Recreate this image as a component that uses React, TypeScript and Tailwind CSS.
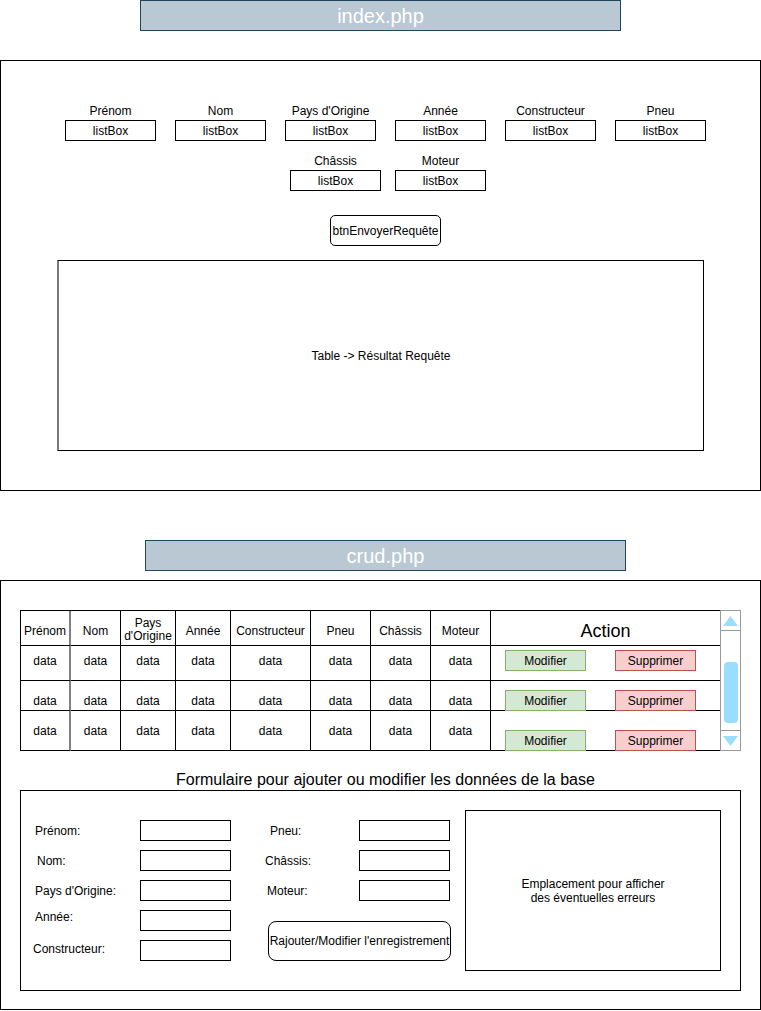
import React from "react";

const font = { fontFamily: '"Liberation Sans", Arial, sans-serif' };

function ListField({ label }: { label: string }) {
  return (
    <div className="flex w-[91px] flex-col items-center">
      <div className="h-[14px] whitespace-nowrap text-[12px] leading-[14px]">{label}</div>
      <div className="mt-[2px] flex h-[21px] w-[91px] items-center justify-center border border-black text-[12px] leading-[14px]">
        listBox
      </div>
    </div>
  );
}

const headers = ["Prénom", "Nom", "Pays\nd'Origine", "Année", "Constructeur", "Pneu", "Châssis", "Moteur"];
const widths = ["w-[50px]", "w-[50px]", "w-[55px]", "w-[55px]", "w-[80px]", "w-[60px]", "w-[60px]", "w-[60px]"];

function ActionButtons({ pt }: { pt: string }) {
  return (
    <div className={`flex h-full w-[230px] items-start border-r border-b border-black ${pt}`}>
      <div className="relative z-10 ml-[14px] flex h-[21px] w-[81px] items-center justify-center border border-[#82b366] bg-[#d5e8d4] text-[12px] leading-[14px]">
        Modifier
      </div>
      <div className="relative z-10 ml-[29px] flex h-[21px] w-[81px] items-center justify-center border border-[#b85450] bg-[#f8cecc] text-[12px] leading-[14px]">
        Supprimer
      </div>
    </div>
  );
}

function DataRow({ h, textPt, btnPt }: { h: string; textPt: string; btnPt: string }) {
  return (
    <div className={`flex ${h}`}>
      {widths.map((w, i) => (
        <div
          key={i}
          className={`${w} flex h-full justify-center border-b ${i === 0 ? "border-r-2 border-r-[#808080]" : "border-r"} border-black ${textPt} text-[12px] leading-[14px]`}
        >
          data
        </div>
      ))}
      <ActionButtons pt={btnPt} />
    </div>
  );
}

function FormInput() {
  return <div className="h-[21px] w-[91px] border border-black bg-white" />;
}

export default function App() {
  return (
    <div className="w-[761px] bg-white text-black" style={font}>
      {/* index.php title */}
      <div className="ml-[140px] flex h-[31px] w-[481px] items-center justify-center border border-[#23445d] bg-[#bac8d3] text-[20px] leading-[24px] text-white">
        index.php
      </div>

      {/* index frame */}
      <div className="mt-[29px] h-[431px] w-[761px] border border-black">
        <div className="ml-[64px] mt-[43px] flex gap-[19px]">
          {["Prénom", "Nom", "Pays d'Origine", "Année", "Constructeur", "Pneu"].map((l) => (
            <ListField key={l} label={l} />
          ))}
        </div>
        <div className="ml-[289px] mt-[13px] flex gap-[14px]">
          <ListField label="Châssis" />
          <ListField label="Moteur" />
        </div>
        <div className="ml-[329px] mt-[24px] flex h-[31px] w-[111px] items-center justify-center rounded-[5px] border border-black text-[12px] leading-[14px]">
          btnEnvoyerRequête
        </div>
        <div className="ml-[56px] mt-[14px] flex h-[191px] w-[647px] items-center justify-center border border-black border-l-2 border-l-[#7a7a7a] text-[12px] leading-[14px]">
          Table -&gt; Résultat Requête
        </div>
      </div>

      {/* crud.php title */}
      <div className="ml-[145px] mt-[49px] flex h-[31px] w-[481px] items-center justify-center border border-[#23445d] bg-[#bac8d3] text-[20px] leading-[24px] text-white">
        crud.php
      </div>

      {/* crud frame */}
      <div className="mt-[9px] h-[430px] w-[761px] border border-black">
        <div className="ml-[19px] mt-[29px] flex">
          {/* table */}
          <div className="flex w-[701px] flex-col border-t border-l border-black">
            <div className="flex h-[35px]">
              {headers.map((hd, i) => (
                <div
                  key={i}
                  className={`${widths[i]} flex h-full justify-center whitespace-pre border-b ${i === 0 ? "border-r-2 border-r-[#808080]" : "border-r"} border-black text-center text-[12px] ${i === 2 ? "pt-[6px] leading-[13px]" : "pt-[13px] leading-[14px]"}`}
                >
                  {hd}
                </div>
              ))}
              <div className="flex h-full w-[230px] items-start justify-center border-r border-b border-black pt-[9px] text-[18px] leading-[22px]">
                Action
              </div>
            </div>
            <DataRow h="h-[35px]" textPt="pt-[8px]" btnPt="pt-[4px]" />
            <DataRow h="h-[30px]" textPt="pt-[13px]" btnPt="pt-[9px]" />
            <DataRow h="h-[40px]" textPt="pt-[13px]" btnPt="pt-[19px]" />
          </div>

          {/* scrollbar */}
          <div className="relative z-20 ml-[-1px] flex h-[141px] w-[21px] flex-col border border-[#999999] bg-white">
            <div className="flex h-[20px] items-center justify-center border-b border-[#999999]">
              <svg width="15" height="10" viewBox="0 0 15 10">
                <polygon points="7.5,0 15,10 0,10" fill="#99ddff" />
              </svg>
            </div>
            <div className="flex flex-1 justify-center pt-[31px]">
              <div className="h-[61px] w-[14px] rounded-[4px] bg-[#99ddff]" />
            </div>
            <div className="flex h-[20px] items-center justify-center border-t border-[#999999]">
              <svg width="15" height="10" viewBox="0 0 15 10">
                <polygon points="0,0 15,0 7.5,10" fill="#99ddff" />
              </svg>
            </div>
          </div>
        </div>

        {/* form title */}
        <div className="ml-[175px] mt-[20px] h-[18px] whitespace-nowrap text-[16px] leading-[18px]">
          Formulaire pour ajouter ou modifier les données de la base
        </div>

        {/* form box */}
        <div className="ml-[19px] mt-[1px] flex h-[201px] w-[721px] border border-black">
          {/* left column */}
          <div className="flex w-[210px] flex-col gap-[9px] pt-[29px]">
            {[
              { l: "Prénom:", pl: "pl-[14px]", extra: "" },
              { l: "Nom:", pl: "pl-[16px]", extra: "" },
              { l: "Pays d'Origine:", pl: "pl-[14px]", extra: "" },
              { l: "Année:", pl: "pl-[14px]", extra: "pb-[7px]" },
              { l: "Constructeur:", pl: "pl-[12px]", extra: "pb-[3px]" },
            ].map((r) => (
              <div key={r.l} className="flex h-[21px]">
                <div className={`flex w-[119px] items-center whitespace-nowrap text-[12px] leading-[14px] ${r.pl} ${r.extra}`}>
                  {r.l}
                </div>
                <FormInput />
              </div>
            ))}
          </div>

          {/* middle column */}
          <div className="flex w-[220px] flex-col pt-[29px]">
            <div className="flex flex-col gap-[9px]">
              {[
                { l: "Pneu:", pl: "pl-[39px]" },
                { l: "Châssis:", pl: "pl-[34px]" },
                { l: "Moteur:", pl: "pl-[36px]" },
              ].map((r) => (
                <div key={r.l} className="flex h-[21px]">
                  <div className={`flex w-[128px] items-center whitespace-nowrap text-[12px] leading-[14px] ${r.pl}`}>
                    {r.l}
                  </div>
                  <FormInput />
                </div>
              ))}
            </div>
            <div className="ml-[37px] mt-[20px] flex h-[40px] w-[183px] items-center justify-center whitespace-nowrap rounded-[8px] border border-black text-[12px] leading-[14px]">
              Rajouter/Modifier l'enregistrement
            </div>
          </div>

          {/* error box */}
          <div className="ml-[14px] mt-[19px] flex h-[161px] w-[256px] items-center justify-center border border-black text-center text-[12px] leading-[14px]">
            Emplacement pour afficher
            <br />
            des éventuelles erreurs
          </div>
        </div>
      </div>
    </div>
  );
}
